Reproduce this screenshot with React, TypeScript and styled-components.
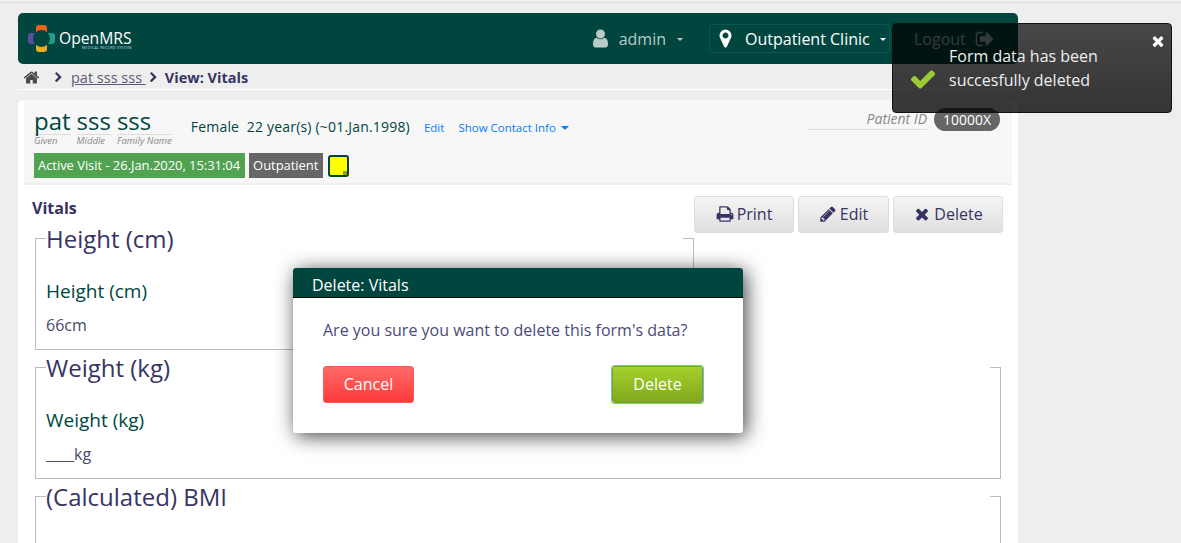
import React from 'react'
import styled, { createGlobalStyle } from 'styled-components'

const Global = createGlobalStyle`
  html, body { margin: 0; padding: 0; height: 543px; overflow: hidden; background: #eee; }
  body { font-family: "Open Sans", "Liberation Sans", sans-serif; font-size: 16px; color: #363463; }
  * { box-sizing: border-box; }
`

// font awesome 4 glyphs, the package only has the newer cuts
const glyphs = {
  home: 'M1472 992v480q0 26-19 45t-45 19h-384v-384h-256v384h-384q-26 0-45-19t-19-45v-480q0-1 .5-3t.5-3l575-474 575 474q1 2 1 6zm223-69l-62 74q-8 9-21 11h-3q-13 0-21-7l-692-577-692 577q-12 8-24 7-13-2-21-11l-62-74q-8-10-7-23.5t11-21.5l719-599q32-26 76-26t76 26l244 204v-195q0-14 9-23t23-9h192q14 0 23 9t9 23v408l219 182q10 8 11 21.5t-7 23.5z',
  chevron: 'M1363 877l-742 742q-19 19-45 19t-45-19l-166-166q-19-19-19-45t19-45l531-531-531-531q-19-19-19-45t19-45l166-166q19-19 45-19t45 19l742 742q19 19 19 45t-19 45z',
  user: 'M1536 1399q0 109-62.5 187t-150.5 78h-854q-88 0-150.5-78t-62.5-187q0-85 8.5-160.5t31.5-152 58.5-131 94-89 134.5-34.5q131 128 313 128t313-128q76 0 134.5 34.5t94 89 58.5 131 31.5 152 8.5 160.5zm-256-887q0 159-112.5 271.5t-271.5 112.5-271.5-112.5-112.5-271.5 112.5-271.5 271.5-112.5 271.5 112.5 112.5 271.5z',
  marker: 'M1152 640q0-106-75-181t-181-75-181 75-75 181 75 181 181 75 181-75 75-181zm256 0q0 109-33 179l-364 774q-16 33-47.5 52t-67.5 19-67.5-19-47.5-52l-365-774q-33-70-33-179 0-212 150-362t362-150 362 150 150 362z',
  signOut: 'M704 1440q0 4 1 20t.5 26.5-3 23.5-10 19.5-20.5 6.5h-320q-119 0-203.5-84.5t-84.5-203.5v-704q0-119 84.5-203.5t203.5-84.5h320q13 0 22.5 9.5t9.5 22.5q0 4 1 20t.5 26.5-3 23.5-10 19.5-20.5 6.5h-320q-66 0-113 47t-47 113v704q0 66 47 113t113 47h312l11.5 1 11.5 3 8 5.5 7 9 2 13.5zm928-544q0 26-19 45l-544 544q-19 19-45 19t-45-19-19-45v-288h-448q-26 0-45-19t-19-45v-384q0-26 19-45t45-19h448v-288q0-26 19-45t45-19 45 19l544 544q19 19 19 45z',
  print: 'M448 1536h896v-256h-896v256zm0-640h896v-384h-160q-40 0-68-28t-28-68v-160h-640v640zm1152 64q0-26-19-45t-45-19-45 19-19 45 19 45 45 19 45-19 19-45zm128 0v416q0 13-9.5 22.5t-22.5 9.5h-224v160q0 40-28 68t-68 28h-960q-40 0-68-28t-28-68v-160h-224q-13 0-22.5-9.5t-9.5-22.5v-416q0-79 56.5-135.5t135.5-56.5h64v-544q0-40 28-68t68-28h672q40 0 88 20t76 48l152 152q28 28 48 76t20 88v256h64q79 0 135.5 56.5t56.5 135.5z',
  pencil: 'M491 1536l91-91-235-235-91 91v107h128v128h107zm523-928q0-22-22-22-10 0-17 7l-542 542q-7 7-7 17 0 22 22 22 10 0 17-7l542-542q7-7 7-17zm-54-192l416 416-832 832h-416v-416zm683 96q0 53-37 90l-166 165-416-416 165-164q36-38 90-38 53 0 91 38l235 234q37 39 37 91z',
  times: 'M1490 1322q0 40-28 68l-136 136q-28 28-68 28t-68-28l-294-294-294 294q-28 28-68 28t-68-28l-136-136q-28-28-28-68t28-68l294-294-294-294q-28-28-28-68t28-68l136-136q28-28 68-28t68 28l294 294 294-294q28-28 68-28t68 28l136 136q28 28 28 68t-28 68l-294 294 294 294q28 28 28 68z',
  check: 'M1671 566q0 40-28 68l-724 724-136 136q-28 28-68 28t-68-28l-136-136-362-362q-28-28-28-68t28-68l136-136q28-28 68-28t68 28l294 295 656-657q28-28 68-28t68 28l136 136q28 28 28 68z',
}

const Icon: React.FC<{ name: keyof typeof glyphs; size: number; color?: string }> = ({ name, size, color }) => (
  <svg width={size} height={size} viewBox="0 0 1792 1792" fill={color || 'currentColor'} style={{ flex: 'none' }}>
    <path d={glyphs[name]} />
  </svg>
)

const Page = styled.div`
  position: relative;
  height: 543px;
  overflow: hidden;
  border-top: 1px solid #ddd;
  margin-top: 2px;
  padding-top: 10px;
`

const Shell = styled.div`
  width: 1000px;
  margin-left: 18px;
`

const Header = styled.header`
  height: 51px;
  background: #00463f;
  border-radius: 5px;
  display: flex;
  align-items: center;
  padding-left: 10px;
  color: #fff;
`

const Logo = styled.div`
  display: flex;
  align-items: center;
  gap: 4px;
`

const LogoWords = styled.div`
  display: flex;
  flex-direction: column;
  align-items: flex-end;
  line-height: 1;
  padding-top: 2px;
`

const LogoName = styled.span`
  font-size: 15.7px;
  line-height: 16px;
  color: #fff;
`

const LogoTag = styled.span`
  font-size: 3.5px;
  line-height: 4px;
  letter-spacing: 0.3px;
  color: #cde;
`

const UserMenu = styled.div`
  margin-left: auto;
  display: flex;
  align-items: center;
  color: #b9cbc8;
  font-size: 16px;
`

const UserName = styled.span`
  margin-left: 8px;
`

const Caret = styled.span<{ $size?: number }>`
  display: inline-block;
  width: 0;
  height: 0;
  border-left: ${p => p.$size || 3}px solid transparent;
  border-right: ${p => p.$size || 3}px solid transparent;
  border-top: ${p => p.$size || 3}px solid currentColor;
`

const UserCaret = styled(Caret)`
  margin: 2px 0 0 11px;
`

const LocationBox = styled.div`
  margin-left: 26px;
  width: 181px;
  height: 29px;
  display: flex;
  align-items: center;
  padding-left: 5px;
  border: 1px solid #0a5a52;
  border-radius: 3px;
  color: #fff;
  font-size: 16px;
  white-space: nowrap;
`

const LocationName = styled.span`
  margin-left: 9px;
`

const LocationCaret = styled(Caret)`
  margin: 2px 0 0 10px;
`

const Logout = styled.div`
  display: flex;
  align-items: center;
  gap: 9px;
  width: 128px;
  padding-left: 24px;
  color: #b9cbc8;
  font-size: 16px;
`

const Crumbs = styled.nav`
  height: 26px;
  display: flex;
  align-items: center;
  padding: 2px 0 0 5px;
  border-bottom: 1px solid #fff;
  font-size: 14.5px;
  color: #363463;
`

const CrumbHome = styled.span`
  display: flex;
  color: #4a4a4a;
  margin-right: 13px;
`

const CrumbLink = styled.a`
  color: #5b5a78;
  text-decoration: underline;
  white-space: pre;
  margin: 0 2px 0 7px;
`

const CrumbCurrent = styled.strong`
  margin-left: 6px;
  font-weight: 700;
`

const Card = styled.main`
  margin-top: 10px;
  background: #fff;
  border-radius: 5px 5px 0 0;
  padding: 0 6px;
  height: 500px;
`

const PatientHeader = styled.section`
  height: 85px;
  background: #f7f7f7;
  border-bottom: 2px solid #eee;
  padding: 7px 12px 0 10px;
`

const PatientTop = styled.div`
  display: flex;
  align-items: flex-start;
`

const NameParts = styled.div`
  display: flex;
  gap: 6px;
`

const NamePart = styled.div`
  display: flex;
  flex-direction: column;
`

const NameValue = styled.span`
  font-size: 24px;
  line-height: 27px;
  color: #00463f;
  border-bottom: 1px solid #ddd;
`

const NameLabel = styled.span`
  font-size: 9.5px;
  line-height: 11px;
  font-style: italic;
  color: #888;
`

const Demographics = styled.span`
  margin: 11px 0 0 19px;
  font-size: 14px;
  line-height: 18px;
  letter-spacing: 0.19px;
  color: #00463f;
  white-space: pre;
`

const BlueLink = styled.a`
  margin: 12px 0 0 14px;
  font-size: 11.5px;
  line-height: 18px;
  color: #007fff;
  display: flex;
  align-items: center;
`

const ContactCaret = styled(Caret)`
  margin-left: 5px;
`

const PatientId = styled.div`
  margin-left: auto;
  display: flex;
  align-items: flex-start;
  gap: 7px;
  margin-top: 1px;
`

const IdLabel = styled.span`
  width: 119px;
  height: 22px;
  line-height: 21px;
  text-align: right;
  font-size: 14px;
  font-style: italic;
  color: #888;
  border-bottom: 1px solid #ddd;
`

const IdBadge = styled.span`
  height: 23px;
  width: 66px;
  text-align: center;
  line-height: 23px;
  border-radius: 12px;
  background: #666;
  color: #fff;
  font-size: 14px;
`

const TagRow = styled.div`
  display: flex;
  align-items: center;
  gap: 4px;
  margin-top: 7px;
`

const Tag = styled.span<{ $bg: string }>`
  height: 25px;
  line-height: 25px;
  padding: 0 5px 0 4px;
  background: ${p => p.$bg};
  color: #fff;
  font-size: 13px;
  letter-spacing: -0.05px;
`

const StickyNote = styled.span`
  position: relative;
  width: 21px;
  height: 22px;
  margin-left: 1px;
  background: #ff0;
  border: 2px solid #00463f;
  border-radius: 3px;
  &::after {
    content: '';
    position: absolute;
    right: 0;
    bottom: 0;
    width: 4px;
    height: 4px;
    background: #9c9c1c;
  }
`

const FormBody = styled.section`
  padding: 11px 11px 0 8px;
`

const Actions = styled.div`
  float: right;
  display: flex;
  gap: 4px;
  margin: 0 -2px 0 0;
`

const ActionButton = styled.button<{ $w: number }>`
  width: ${p => p.$w}px;
  height: 37px;
  display: flex;
  align-items: center;
  justify-content: center;
  gap: 3px;
  padding: 0 0 2px;
  font: 16px "Open Sans", "Liberation Sans", sans-serif;
  color: #363463;
  background: linear-gradient(#f5f5f5, #dfdfdf);
  border: 1px solid #ddd;
  border-radius: 3px;
`

const FormTitle = styled.h2`
  margin: 0 0 2px;
  font-size: 16px;
  line-height: 24px;
  font-weight: 700;
  color: #363463;
`

const Group = styled.fieldset<{ $tall?: boolean }>`
  margin: 0 0 1px 3px;
  padding: 0 10px 13px;
  border: 1px solid #bbb;
  min-width: 0;
  overflow: hidden;
  min-height: ${p => (p.$tall ? '200px' : '0')};
`

const Legend = styled.legend`
  width: 100%;
  padding: 0;
  font-size: 24px;
  line-height: 33px;
  color: #363463;
`

const Question = styled.div`
  margin-top: 23px;
  font-size: 19px;
  line-height: 26px;
  color: #00463f;
`

const Answer = styled.div`
  margin-top: 10px;
  font-size: 16px;
  line-height: 22px;
  color: #4a4a6a;
`

const Modal = styled.div`
  position: absolute;
  left: 293px;
  top: 265px;
  width: 450px;
  height: 165px;
  background: #fff;
  border-radius: 3px;
  box-shadow: 3px 3px 20px rgba(0, 0, 0, 0.75);
`

const ModalHeader = styled.div`
  height: 30px;
  padding: 5px 0 0 19px;
  background: #00463f;
  border-radius: 3px 3px 0 0;
  border-bottom: 1px solid #000;
  color: #fff;
  font-size: 16px;
  line-height: 24px;
`

const ModalBody = styled.div`
  padding: 20px 40px 0 30px;
`

const ModalText = styled.p`
  margin: 0;
  font-size: 16px;
  line-height: 24px;
  color: #4c4a78;
`

const ModalButtons = styled.div`
  display: flex;
  justify-content: space-between;
  margin-top: 24px;
`

const DialogButton = styled.button<{ $tone: 'cancel' | 'confirm' }>`
  width: 91px;
  height: 37px;
  padding: 0 0 2px;
  font: 16px "Open Sans", "Liberation Sans", sans-serif;
  color: #fff;
  border-radius: 3px;
  border: 1px solid ${p => (p.$tone === 'cancel' ? '#ff5a5a' : '#7aa51f')};
  box-shadow: ${p => (p.$tone === 'cancel' ? 'none' : '0 0 0 1px #7fb2ee')};
  background: ${p =>
    p.$tone === 'cancel'
      ? 'linear-gradient(#ff6a6a, #ff3a3a)'
      : 'linear-gradient(#a5d02c, #80a81c)'};
`

const Toast = styled.div`
  position: absolute;
  left: 892px;
  top: 20px;
  width: 280px;
  height: 90px;
  display: flex;
  align-items: center;
  padding-left: 16px;
  border: 1px solid #111;
  border-radius: 4px;
  color: #eee;
  font-size: 16px;
  line-height: 24px;
  background: linear-gradient(rgba(0, 0, 0, 0.7), rgba(0, 0, 0, 0.78));
`

const ToastCheck = styled.span`
  display: flex;
  margin-top: 21px;
`

const ToastText = styled.div`
  margin-left: 12px;
`

const ToastClose = styled.span`
  position: absolute;
  top: 9px;
  right: 5px;
  display: flex;
  color: #fff;
`

const OpenMrsMark = () => (
  <svg width="27" height="27" viewBox="0 0 27 27">
    <rect x="8" y="0" width="11" height="10" rx="3" fill="#e8641f" />
    <rect x="17" y="8" width="10" height="11" rx="3" fill="#1f9c8c" />
    <rect x="8" y="17" width="11" height="10" rx="3" fill="#f0a81e" />
    <rect x="0" y="8" width="10" height="11" rx="3" fill="#5a4ea0" />
    <circle cx="13.5" cy="13.5" r="8.5" fill="#00463f" />
  </svg>
)

const App: React.FC = () => {
  return (
    <>
      <Global />
      <Page>
        <Shell>
          <Header>
            <Logo>
              <OpenMrsMark />
              <LogoWords>
                <LogoName>OpenMRS</LogoName>
                <LogoTag>MEDICAL RECORD SYSTEM</LogoTag>
              </LogoWords>
            </Logo>
            <UserMenu>
              <Icon name="user" size={21} />
              <UserName>admin</UserName>
              <UserCaret />
              <LocationBox>
                <Icon name="marker" size={21} />
                <LocationName>Outpatient Clinic</LocationName>
                <LocationCaret />
              </LocationBox>
              <Logout>
                Logout <Icon name="signOut" size={20} />
              </Logout>
            </UserMenu>
          </Header>
          <Crumbs>
            <CrumbHome><Icon name="home" size={17} /></CrumbHome>
            <Icon name="chevron" size={11} />
            <CrumbLink>pat sss sss </CrumbLink>
            <Icon name="chevron" size={11} />
            <CrumbCurrent>View: Vitals</CrumbCurrent>
          </Crumbs>
          <Card>
            <PatientHeader>
              <PatientTop>
                <NameParts>
                  <NamePart>
                    <NameValue>pat</NameValue>
                    <NameLabel>Given</NameLabel>
                  </NamePart>
                  <NamePart>
                    <NameValue>sss</NameValue>
                    <NameLabel>Middle</NameLabel>
                  </NamePart>
                  <NamePart>
                    <NameValue>sss</NameValue>
                    <NameLabel>Family Name</NameLabel>
                  </NamePart>
                </NameParts>
                <Demographics>Female  22 year(s) (~01.Jan.1998)</Demographics>
                <BlueLink>Edit</BlueLink>
                <BlueLink>
                  Show Contact Info
                  <ContactCaret $size={4.5} />
                </BlueLink>
                <PatientId>
                  <IdLabel>Patient ID</IdLabel>
                  <IdBadge>10000X</IdBadge>
                </PatientId>
              </PatientTop>
              <TagRow>
                <Tag $bg="#51a351">Active Visit - 26.Jan.2020, 15:31:04</Tag>
                <Tag $bg="#666">Outpatient</Tag>
                <StickyNote />
              </TagRow>
            </PatientHeader>
            <FormBody>
              <Actions>
                <ActionButton $w={100}><Icon name="print" size={18} />Print</ActionButton>
                <ActionButton $w={91}><Icon name="pencil" size={18} />Edit</ActionButton>
                <ActionButton $w={110}><Icon name="times" size={18} />Delete</ActionButton>
              </Actions>
              <FormTitle>Vitals</FormTitle>
              <Group>
                <Legend>Height (cm)</Legend>
                <Question>Height (cm)</Question>
                <Answer>66cm</Answer>
              </Group>
              <Group>
                <Legend>Weight (kg)</Legend>
                <Question>Weight (kg)</Question>
                <Answer>____kg</Answer>
              </Group>
              <Group $tall>
                <Legend>(Calculated) BMI</Legend>
              </Group>
            </FormBody>
          </Card>
        </Shell>
        <Modal>
          <ModalHeader>Delete: Vitals</ModalHeader>
          <ModalBody>
            <ModalText>Are you sure you want to delete this form's data?</ModalText>
            <ModalButtons>
              <DialogButton $tone="cancel">Cancel</DialogButton>
              <DialogButton $tone="confirm">Delete</DialogButton>
            </ModalButtons>
          </ModalBody>
        </Modal>
        <Toast>
          <ToastCheck><Icon name="check" size={28} color="#9ccc35" /></ToastCheck>
          <ToastText>Form data has been<br />succesfully deleted</ToastText>
          <ToastClose><Icon name="times" size={16} /></ToastClose>
        </Toast>
      </Page>
    </>
  )
}

export default App
